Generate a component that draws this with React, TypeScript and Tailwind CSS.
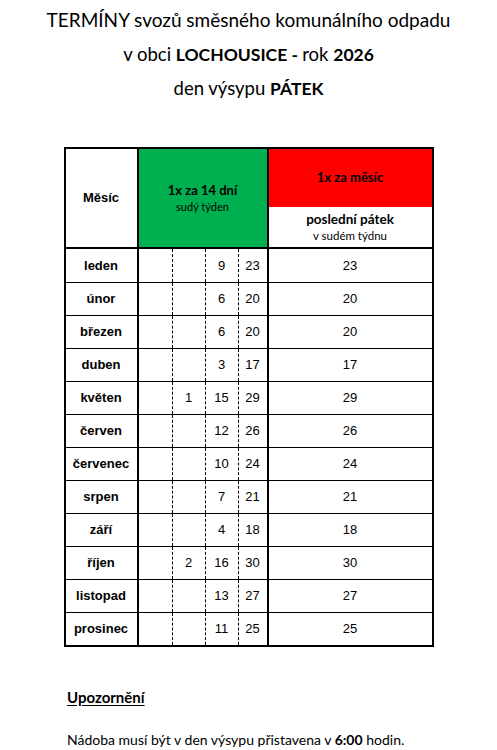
import * as React from 'react';

const calibri = { fontFamily: 'Lato, "Noto Sans", sans-serif' };

type Row = { month: string; a: string; b: string; c: string; d: string; last: string };

const rows: Row[] = [
  { month: 'leden', a: '', b: '', c: '9', d: '23', last: '23' },
  { month: 'únor', a: '', b: '', c: '6', d: '20', last: '20' },
  { month: 'březen', a: '', b: '', c: '6', d: '20', last: '20' },
  { month: 'duben', a: '', b: '', c: '3', d: '17', last: '17' },
  { month: 'květen', a: '', b: '1', c: '15', d: '29', last: '29' },
  { month: 'červen', a: '', b: '', c: '12', d: '26', last: '26' },
  { month: 'červenec', a: '', b: '', c: '10', d: '24', last: '24' },
  { month: 'srpen', a: '', b: '', c: '7', d: '21', last: '21' },
  { month: 'září', a: '', b: '', c: '4', d: '18', last: '18' },
  { month: 'říjen', a: '', b: '2', c: '16', d: '30', last: '30' },
  { month: 'listopad', a: '', b: '', c: '13', d: '27', last: '27' },
  { month: 'prosinec', a: '', b: '', c: '11', d: '25', last: '25' },
];

function TableRow({ row, first }: { row: Row; first: boolean }) {
  return (
    <div
      className={
        'flex h-[33px] text-[13px] text-black ' + (first ? '' : 'border-t border-black')
      }
      style={{ fontFamily: '"Liberation Sans", Arial, sans-serif' }}
    >
      <div className="flex w-[71px] items-center justify-center font-bold">{row.month}</div>
      <div className="flex w-[130px] border-l-2 border-black">
        <div className="flex w-[33px] items-center justify-center">{row.a}</div>
        <div className="flex w-[33px] items-center justify-center border-l border-dashed border-black">
          {row.b}
        </div>
        <div className="flex w-[33px] items-center justify-center border-l border-dashed border-black">
          {row.c}
        </div>
        <div className="flex flex-1 items-center justify-center border-l border-dashed border-black">
          {row.d}
        </div>
      </div>
      <div className="flex flex-1 items-center justify-center border-l-2 border-black">{row.last}</div>
    </div>
  );
}

export default function App() {
  return (
    <div className="h-[750px] w-[497px] overflow-hidden bg-white text-black">
      <div className="pt-[3px] text-center text-[18.5px] leading-[34px]" style={calibri}>
        <div className="h-[34px] text-[19px]">TERMÍNY svozů směsného komunálního odpadu</div>
        <div className="h-[34px]">
          v obci <span className="text-[17.5px] font-bold">LOCHOUSICE - </span>rok{' '}
          <span className="text-[17.5px] font-bold">2026</span>
        </div>
        <div className="h-[34px]">
          den výsypu <span className="text-[17.5px] font-bold">PÁTEK</span>
        </div>
      </div>

      <div className="mx-auto mt-[42px] w-[370px] border-2 border-black">
        <div className="flex h-[100px] border-b-2 border-black">
          <div
            className="flex w-[71px] items-center justify-center text-[13px] font-bold"
            style={{ fontFamily: '"Liberation Sans", Arial, sans-serif' }}
          >
            Měsíc
          </div>
          <div
            className="flex w-[130px] flex-col items-center justify-center border-l-2 border-black bg-[#00b050]"
            style={calibri}
          >
            <div className="text-[13px] font-bold leading-[18px]">1x za 14 dní</div>
            <div className="text-[11px] leading-[16px]">sudý týden</div>
          </div>
          <div className="flex flex-1 flex-col border-l-2 border-black" style={calibri}>
            <div className="flex h-[58px] items-center justify-center bg-[#ff0000] text-[13px] font-bold">
              1x za měsíc
            </div>
            <div className="flex flex-1 flex-col items-center justify-center">
              <div className="text-[13.5px] font-bold leading-[18px]">poslední pátek</div>
              <div className="text-[11.5px] leading-[16px]">v sudém týdnu</div>
            </div>
          </div>
        </div>
        {rows.map((r, i) => (
          <TableRow key={r.month} row={r} first={i === 0} />
        ))}
      </div>

      <div className="ml-[67px] mt-[40px] text-[14px]" style={calibri}>
        <div className="text-[15px] font-bold leading-[20px] underline underline-offset-2">Upozornění</div>
        <div className="mt-[23px] leading-[20px]">
          Nádoba musí být v den výsypu přistavena v <span className="font-bold">6:00</span> hodin.
        </div>
      </div>
    </div>
  );
}
